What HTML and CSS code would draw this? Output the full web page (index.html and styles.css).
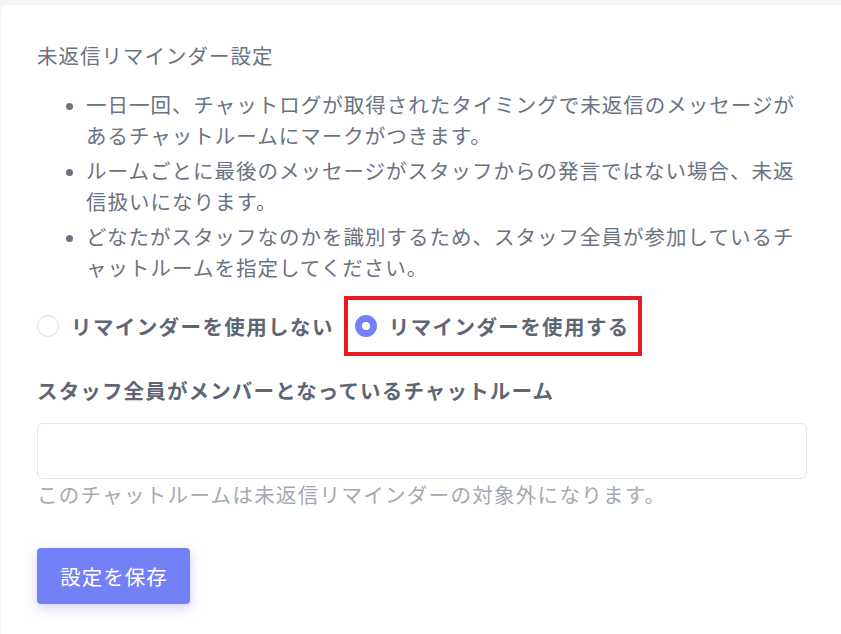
FILE: index.html
```html
<!DOCTYPE html>
<html lang="ja">
<head>
<meta charset="utf-8">
<title>未返信リマインダー設定</title>
<link rel="stylesheet" href="styles.css">
</head>
<body>
<div class="card">
  <div class="title">未返信リマインダー設定</div>
  <ul class="notes">
    <li>一日一回、チャットログが取得されたタイミングで未返信のメッセージがあるチャットルームにマークがつきます。</li>
    <li>ルームごとに最後のメッセージがスタッフからの発言ではない場合、未返信扱いになります。</li>
    <li>どなたがスタッフなのかを識別するため、スタッフ全員が参加しているチャットルームを指定してください。</li>
  </ul>
  <div class="radios">
    <label class="radio"><input type="radio" name="reminder"><span>リマインダーを使用しない</span></label>
    <label class="radio highlight"><input type="radio" name="reminder" checked><span>リマインダーを使用する</span></label>
  </div>
  <div class="field-label">スタッフ全員がメンバーとなっているチャットルーム</div>
  <input class="text-input" type="text">
  <div class="help">このチャットルームは未返信リマインダーの対象外になります。</div>
  <button class="save" type="button">設定を保存</button>
</div>
</body>
</html>
```

FILE: styles.css
```css
* { box-sizing: border-box; }
html, body { margin: 0; padding: 0; }
body {
  background: #f3f4f8;
  font-family: "Noto Sans CJK JP", "Noto Sans", sans-serif;
  font-size: 20.5px;
  letter-spacing: 1px;
  color: #6b7280;
  height: 634px;
  overflow: hidden;
}
.card {
  margin: 5px 0 0 1px;
  background: #fff;
  border-radius: 6px 0 0 0;
  padding: 35px 34px 40px 36px;
  min-height: 640px;
}
.title {
  line-height: 31px;
  margin: 0;
}
.notes {
  margin: 18px 0 0 0;
  padding: 0 0 0 49px;
  line-height: 31px;
}
.notes li { margin: 0; }
.notes li + li { margin-top: 4px; }
.notes li::marker { color: #6b7280; font-size: 17px; }
.radios {
  display: flex;
  align-items: center;
  gap: 10px;
  margin-top: 13px;
  height: 60px;
}
.radio {
  display: inline-flex;
  align-items: center;
  gap: 12px;
  font-weight: 700;
  letter-spacing: 1.4px;
  color: #5f6673;
  line-height: 31px;
}
.radio input {
  appearance: none;
  -webkit-appearance: none;
  margin: 0;
  width: 22px;
  height: 22px;
  border-radius: 50%;
  border: 1px solid #dcdfe4;
  background: #fff;
  flex: none;
}
.radio input:checked {
  border: 7px solid #7480f6;
  background: #fff;
}
.highlight {
  height: 60px;
  border: 4px solid #e51c21;
  padding: 0 8px 0 7px;
}
.field-label {
  margin-top: 19px;
  font-weight: 700;
  letter-spacing: 1.15px;
  color: #5f6673;
  line-height: 31px;
}
.text-input {
  display: block;
  width: 100%;
  height: 56px;
  margin-top: 17px;
  border: 1px solid #e3e5e9;
  border-radius: 6px;
  background: #fff;
  font: inherit;
  padding: 0 12px;
  outline: none;
}
.help {
  color: #a3a9b3;
  letter-spacing: 1.3px;
  line-height: 31px;
}
.save {
  display: block;
  margin-top: 38px;
  width: 153px;
  height: 56px;
  border: none;
  border-radius: 4px;
  background: #7480f6;
  color: #fff;
  font: inherit;
  letter-spacing: 1px;
  padding: 0 0 0 1px;
  box-shadow: 0 4px 12px rgba(116, 128, 246, 0.35);
}
```
